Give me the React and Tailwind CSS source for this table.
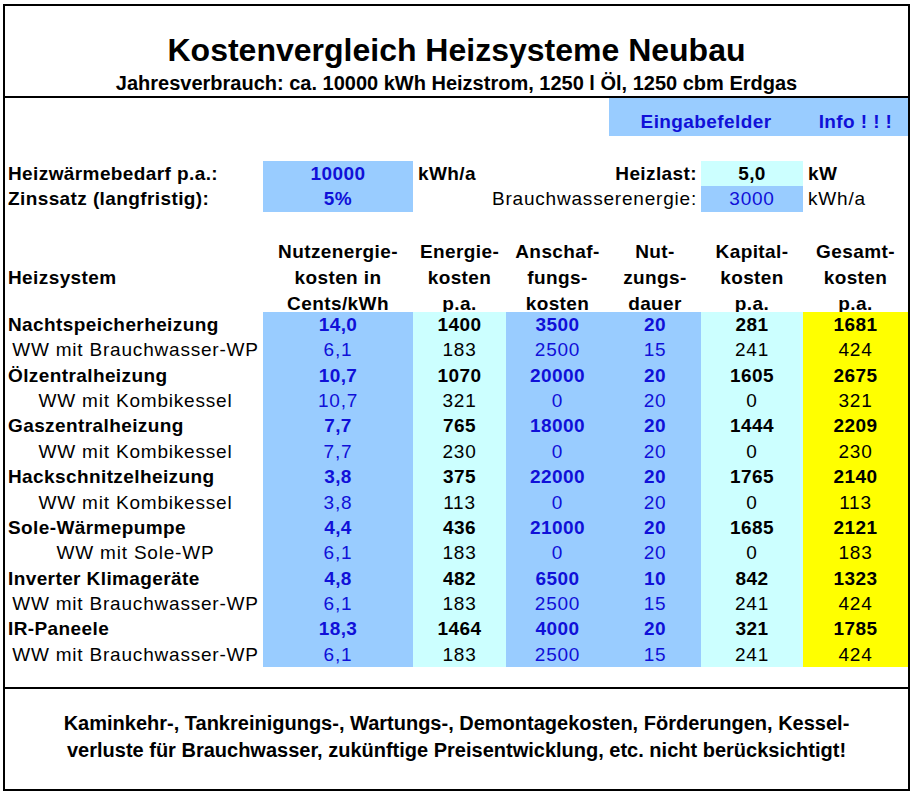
import React from 'react';

const rows = [
  { label: 'Nachtspeicherheizung', main: true, v: ['14,0', '1400', '3500', '20', '281', '1681'] },
  { label: 'WW mit Brauchwasser-WP', v: ['6,1', '183', '2500', '15', '241', '424'] },
  { label: 'Ölzentralheizung', main: true, v: ['10,7', '1070', '20000', '20', '1605', '2675'] },
  { label: 'WW mit Kombikessel', v: ['10,7', '321', '0', '20', '0', '321'] },
  { label: 'Gaszentralheizung', main: true, v: ['7,7', '765', '18000', '20', '1444', '2209'] },
  { label: 'WW mit Kombikessel', v: ['7,7', '230', '0', '20', '0', '230'] },
  { label: 'Hackschnitzelheizung', main: true, v: ['3,8', '375', '22000', '20', '1765', '2140'] },
  { label: 'WW mit Kombikessel', v: ['3,8', '113', '0', '20', '0', '113'] },
  { label: 'Sole-Wärmepumpe', main: true, v: ['4,4', '436', '21000', '20', '1685', '2121'] },
  { label: 'WW mit Sole-WP', v: ['6,1', '183', '0', '20', '0', '183'] },
  { label: 'Inverter Klimageräte', main: true, v: ['4,8', '482', '6500', '10', '842', '1323'] },
  { label: 'WW mit Brauchwasser-WP', v: ['6,1', '183', '2500', '15', '241', '424'] },
  { label: 'IR-Paneele', main: true, v: ['18,3', '1464', '4000', '20', '321', '1785'] },
  { label: 'WW mit Brauchwasser-WP', v: ['6,1', '183', '2500', '15', '241', '424'] },
];

const headers = [
  ['Nutzenergie-', 'kosten in', 'Cents/kWh'],
  ['Energie-', 'kosten', 'p.a.'],
  ['Anschaf-', 'fungs-', 'kosten'],
  ['Nut-', 'zungs-', 'dauer'],
  ['Kapital-', 'kosten', 'p.a.'],
  ['Gesamt-', 'kosten', 'p.a.'],
];

// per value column: background + text colour
const colStyle = [
  'bg-[#99ccff] text-[#1010d8]',
  'bg-[#ccffff] text-black',
  'bg-[#99ccff] text-[#1010d8]',
  'bg-[#99ccff] text-[#1010d8]',
  'bg-[#ccffff] text-black',
  'bg-[#ffff00] text-black',
];

const grid = 'grid grid-cols-[258px_150px_93px_103px_92px_102px_1fr]';

export default function App() {
  return (
    <div
      className="w-[915px] h-[798px] bg-white pl-[3px] pt-[4px] text-black"
      style={{ fontFamily: '"Liberation Sans", Arial, sans-serif' }}
    >
      <div className="w-[907px] border-2 border-black flex flex-col">
        {/* title */}
        <div className="h-[92px] border-b-2 border-black flex flex-col items-center pt-[26px]">
          <div className="text-[32px] leading-[36px] font-bold">Kostenvergleich Heizsysteme Neubau</div>
          <div className="mt-[3px] text-[20px] leading-[24px] font-bold">
            Jahresverbrauch: ca. 10000 kWh Heizstrom, 1250 l Öl, 1250 cbm Erdgas
          </div>
        </div>

        {/* main sheet */}
        <div className="h-[591px] border-b-2 border-black flex flex-col text-[19px] tracking-[0.4px]">
          <div className={`${grid} h-[38px]`}>
            <div className="col-span-4" />
            <div className="col-span-2 bg-[#99ccff] text-[#1010d8] font-bold text-[19px] text-center pt-[13px] leading-[22px]">
              Eingabefelder
            </div>
            <div className="bg-[#99ccff] text-[#1010d8] font-bold text-[19px] text-center pt-[13px] leading-[22px]">
              Info ! ! !
            </div>
          </div>

          <div className="h-[25px]" />

          <div className={`${grid} h-[25px] leading-[25px]`}>
            <div className="pl-[3px] font-bold">Heizwärmebedarf p.a.:</div>
            <div className="bg-[#99ccff] text-[#1010d8] font-bold text-center">10000</div>
            <div className="pl-[5px] font-bold">kWh/a</div>
            <div className="col-span-2 text-right pr-[4px] font-bold">Heizlast:</div>
            <div className="bg-[#ccffff] font-bold text-center">5,0</div>
            <div className="pl-[5px] font-bold">kW</div>
          </div>
          <div className={`${grid} h-[26px] leading-[26px]`}>
            <div className="pl-[3px] font-bold">Zinssatz (langfristig):</div>
            <div className="bg-[#99ccff] text-[#1010d8] font-bold text-center">5%</div>
            <div className="col-span-3 text-right pr-[4px] tracking-[0.8px]">Brauchwasserenergie:</div>
            <div className="bg-[#99ccff] text-[#1010d8] text-center tracking-[0.8px]">3000</div>
            <div className="pl-[5px] tracking-[0.8px]">kWh/a</div>
          </div>

          <div className="h-[24px]" />

          <div className={`${grid} h-[76px] leading-[26px] font-bold`}>
            <div className="pl-[3px] pt-[29px]">Heizsystem</div>
            {headers.map((h, i) => (
              <div key={i} className="flex flex-col items-center pt-[3px]">
                {h.map((line) => (
                  <span key={line}>{line}</span>
                ))}
              </div>
            ))}
          </div>

          <div className="flex flex-col">
            {rows.map((r, i) => (
              <div
                key={i}
                className={`${grid} h-[25.36px] leading-[25px] ${r.main ? 'font-bold' : 'tracking-[0.8px]'}`}
              >
                <div className={r.main ? 'pl-[3px]' : 'text-center pl-[3px]'}>{r.label}</div>
                {r.v.map((val, j) => (
                  <div key={j} className={`text-center ${colStyle[j]}`}>
                    {val}
                  </div>
                ))}
              </div>
            ))}
          </div>
        </div>

        {/* footer note */}
        <div className="h-[100px] pt-[21px] text-center text-[20px] leading-[27px] font-bold">
          <div>Kaminkehr-, Tankreinigungs-, Wartungs-, Demontagekosten, Förderungen, Kessel-</div>
          <div>verluste für Brauchwasser, zukünftige Preisentwicklung, etc. nicht berücksichtigt!</div>
        </div>
      </div>
    </div>
  );
}
